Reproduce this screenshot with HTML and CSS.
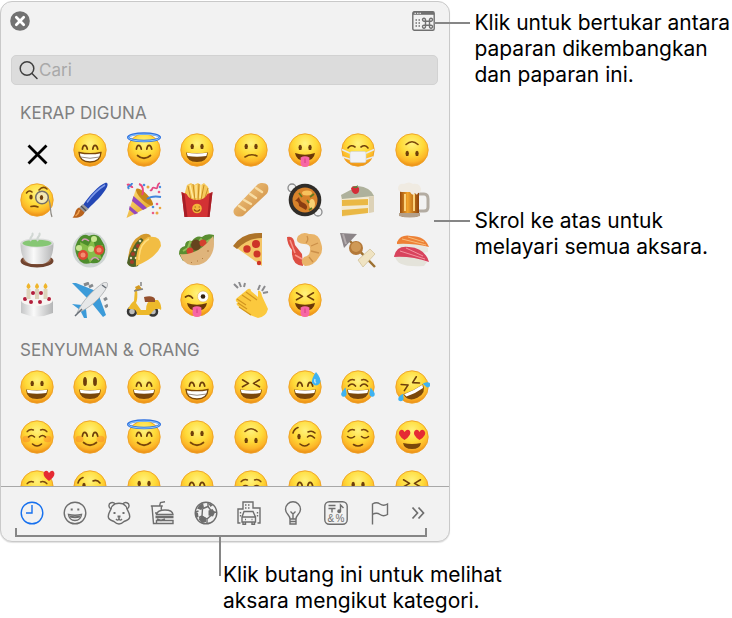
FILE: index.html
```html
<!DOCTYPE html>
<html lang="ms">
<head>
    <meta charset="UTF-8">
    <meta name="viewport" content="width=device-width, initial-scale=1.0">
    <title>Pelihat Aksara</title>
    <link rel="stylesheet" href="styles.css">
</head>
<body>
    <!-- Emoji artwork -->
    <svg class="sprite" aria-hidden="true">
        <defs>
            <radialGradient id="skin" cx=".5" cy=".3" r=".7">
                <stop offset="0" stop-color="#fff27c"/>
                <stop offset=".5" stop-color="#ffda38"/>
                <stop offset=".8" stop-color="#fcb628"/>
                <stop offset="1" stop-color="#ea8a15"/>
            </radialGradient>
            <linearGradient id="gold" x1="0" y1="0" x2="1" y2="1">
                <stop offset="0" stop-color="#ffe27c"/>
                <stop offset="1" stop-color="#e09c1c"/>
            </linearGradient>
            <linearGradient id="bread" x1="0" y1="0" x2="1" y2="1">
                <stop offset="0" stop-color="#f6cf8a"/>
                <stop offset="1" stop-color="#c98336"/>
            </linearGradient>
            <linearGradient id="china" x1="0" y1="0" x2="1" y2="0">
                <stop offset="0" stop-color="#c4c5c6"/>
                <stop offset=".4" stop-color="#fafafa"/>
                <stop offset="1" stop-color="#b4b5b6"/>
            </linearGradient>
            <linearGradient id="beer" x1="0" y1="0" x2="1" y2="0">
                <stop offset="0" stop-color="#9a4c0c"/>
                <stop offset=".4" stop-color="#f3a52c"/>
                <stop offset="1" stop-color="#8e430a"/>
            </linearGradient>

            <circle id="face" cx="18" cy="18" r="16.2" fill="url(#skin)" stroke="#eea024" stroke-width=".9"/>
            <g id="eyes" fill="#6e3f0b">
                <ellipse cx="13.2" cy="14.4" rx="1.7" ry="2.7"/>
                <ellipse cx="23" cy="14.4" rx="1.7" ry="2.7"/>
            </g>
            <path id="eyes-happy" d="M10.4 17.2c.5-5.2 4-5.2 4.9 0M20.8 17.2c.5-5.2 4-5.2 4.9 0" fill="none" stroke="#6e3f0b" stroke-width="1.7" stroke-linecap="round"/>
            <path id="eyes-squint" d="M9.5 10.8l6 3.6-6 3.4M26.5 10.8l-6 3.6 6 3.4" fill="none" stroke="#6e3f0b" stroke-width="1.6" stroke-linecap="round" stroke-linejoin="round"/>
            <path id="brows" d="M8.2 12.6q3-3.2 6.2-1.6M27.8 12.6q-3-3.2-6.2-1.6" fill="none" stroke="#7b480d" stroke-width="1.5" stroke-linecap="round"/>
            <g id="mouth-open">
                <path d="M7 20.5q11 1.6 22 0Q28.4 30 18 30T7 20.5Z" fill="#7a470a"/>
                <path d="M7.7 20.8q10.3 1.4 20.6 0l-1 3.2q-9.3 1.6-18.6 0Z" fill="#fff"/>
            </g>
            <g id="mouth-teeth">
                <path d="M7 20.5q11 2.4 22 0Q28.4 30 18 30T7 20.5Z" fill="#fff" stroke="#7a470a" stroke-width="1.3"/>
                <path d="M8.5 25q9.5 2.5 19 0" fill="none" stroke="#9a8f84"/>
            </g>
            <path id="mouth-smile" d="M11.5 23.5q6.5 5.5 13 0" fill="none" stroke="#7a470a" stroke-width="1.7" stroke-linecap="round"/>
            <g id="mouth-tongue">
                <path d="M8 21q10 3.5 20 0-1.2 7.800-10 7.800T8 21Z" fill="#6b3708"/>
                <path d="M13.600 25.500q4.300-2.500 8.800 0v6.500q-.6 3-4.400 3t-4.400-3Z" fill="#f766a5"/>
                <path d="M18 26.500v4.500" stroke="#d43d80"/>
            </g>
            <g id="blush" fill="#fa7a26" opacity=".4">
                <ellipse cx="7.5" cy="20" rx="4" ry="3.2"/>
                <ellipse cx="28.5" cy="20" rx="4" ry="3.2"/>
            </g>
            <path id="tear" d="M5.500 18.500c-2.400 3-5.200 5.500-4 8 1.200 2 4.600 1.400 5-1 .3-2-.6-3.500-1-7Z" fill="#3fb3f2"/>
        </defs>

        <symbol id="cross" viewBox="0 0 36 36"><path d="M10.500 14.500l16 16M26.500 14.500l-16 16" stroke="#000" stroke-width="2.800" stroke-linecap="square"/></symbol>
        <symbol id="beaming" viewBox="0 0 36 36"><use href="#face"/><use href="#eyes-happy"/><use href="#mouth-teeth"/></symbol>
        <symbol id="halo" viewBox="0 0 36 36">
            <use href="#face"/><use href="#eyes-happy"/><use href="#mouth-smile"/>
            <ellipse cx="18" cy="5.300" rx="15.800" ry="3.800" fill="none" stroke="#2d70e0" stroke-width="2.500"/>
            <ellipse cx="18" cy="5.600" rx="15.600" ry="3.500" fill="none" stroke="#8dc8fa" stroke-width="1"/>
        </symbol>
        <symbol id="grinning" viewBox="0 0 36 36"><use href="#face"/><use href="#eyes"/><use href="#mouth-open"/></symbol>
        <symbol id="confused" viewBox="0 0 36 36"><use href="#face"/><use href="#eyes"/><path d="M12 25q6-4 12-1" fill="none" stroke="#7a470a" stroke-width="1.600" stroke-linecap="round"/></symbol>
        <symbol id="tongue" viewBox="0 0 36 36"><use href="#face"/><use href="#eyes" y="1"/><use href="#mouth-tongue"/></symbol>
        <symbol id="mask" viewBox="0 0 36 36">
            <use href="#face"/><path d="M8 16q3-4 7-1M28 16q-3-4-7-1" fill="none" stroke="#6e3f0b" stroke-width="1.600" stroke-linecap="round"/>
            <path d="M1.800 17.500l9 4M34.200 17.500l-9 4M2.800 25l8 2.500M33.200 25l-8 2.500" stroke="#e8eaee" stroke-width="1.400"/>
            <rect x="10" y="19.500" width="16" height="11" rx="1.500" fill="#f1f2f6" stroke="#cfd1d8" stroke-width=".6"/>
        </symbol>
        <symbol id="upside-down" viewBox="0 0 36 36"><use href="#face"/><path d="M12 12.500q6-5.500 12 0" fill="none" stroke="#7a470a" stroke-width="1.600" stroke-linecap="round"/><use href="#eyes" y="7"/></symbol>
        <symbol id="monocle" viewBox="0 0 36 36">
            <use href="#face"/>
            <path d="M7.500 11q2.500-3.500 5.500-1M20 8q4-4.500 8-1M12 24.500q4-1 7 .5" fill="none" stroke="#7a470a" stroke-width="1.600" stroke-linecap="round"/>
            <ellipse cx="12" cy="15" rx="1.700" ry="2.500" fill="#6e3f0b"/>
            <circle cx="23" cy="15.500" r="6.300" fill="#f2e8b4" stroke="#75706a" stroke-width="1.500"/>
            <ellipse cx="22.500" cy="15.500" rx="1.700" ry="2.500" fill="#6e3f0b"/>
            <path d="M29.500 17c3 6 1 12 3.500 18" fill="none" stroke="#8c8880" stroke-width="1.200"/>
        </symbol>
        <symbol id="brush" viewBox="0 0 36 36">
            <path d="M11 23C17 14 27 3 33 1c3-1 3 2 2 4-4 8-12 15-19 22Z" fill="#2447b5"/>
            <path d="M15 20.500C21 12 28 6 33 3" fill="none" stroke="#7f9bea" stroke-width="1.500"/>
            <path d="M11 22l5.500 5-4.500 4-5-5Z" fill="#98989b"/><path d="M9 24l5 4.700" stroke="#4e4e52" stroke-width="1.200"/>
            <path d="M7 25.500l5.500 5C11 35 5 36.500.500 35.500 4 33 2 28 7 25.500Z" fill="#b8621d"/>
            <path d="M7.500 28q-1 4-4 6" fill="none" stroke="#f0a04d" stroke-width="1.500"/>
        </symbol>
        <symbol id="party" viewBox="0 0 36 36">
            <path d="M10 7l16.500 16L.500 36Z" fill="url(#gold)"/>
            <path d="M7.500 14l13.500 12-4 2L6 19ZM3.700 24l8.500 7-3.500 1.500L3 27.500Z" fill="#9448bd"/>
            <ellipse cx="18.500" cy="15" rx="3.600" ry="11.500" transform="rotate(-45 18.500 15)" fill="#c78618"/>
            <path d="M16 13c2-4 1-10-3-11M1 3c4-2 3 3 6 2" fill="none" stroke="#ed467b" stroke-width="2"/>
            <path d="M21 17c4-3 8-3 14-2M3 7c-3-4 3-2 3-6" fill="none" stroke="#4386dc" stroke-width="2"/>
            <path d="M24 8c3 2 1-4 5-2s1-4 5-5" fill="none" stroke="#e44982" stroke-width="1.800"/>
            <g fill="#eb5d86"><circle cx="33" cy="10" r="1.300"/><circle cx="31" cy="22" r="1.300"/><circle cx="27" cy="31" r="1.300"/></g>
            <g fill="#eba63f"><circle cx="22" cy="5" r="1.500"/><circle cx="34" cy="26" r="1.300"/><circle cx="31" cy="31" r="1.500"/></g>
            <g fill="#4b8fe0"><circle cx="18" cy="3" r="1.300"/><circle cx="27" cy="25" r="1.300"/><circle cx="34" cy="5" r="1.200"/></g>
        </symbol>
        <symbol id="fries" viewBox="0 0 36 36">
            <path d="M5 14L8 3l4-2 3 2 4-2 3 2 3-2 4 4 2 9-6 10H10Z" fill="#f6c95c"/>
            <path d="M9 4l3 14M14 2l2 16M20 2l-1 17M25 3l-3 15M29 6l-4 13M6 11l4 8" stroke="#c98f22" stroke-width="1"/>
            <path d="M11 3l3 13M17 3v13M22 3l-1 13" stroke="#ffeaa0" stroke-width="1.300"/>
            <path d="M2.500 10l5 2q3 6 10.500 6t10.500-6l5-2-3 25H5.500Z" fill="#d33234"/>
            <path d="M2.500 10l3 2 3 23h-3ZM33.500 10l-3 2-2 23h2Z" fill="#a81e27"/>
            <circle cx="18" cy="26.500" r="4.800" fill="#f3b53a"/><path d="M15 27.500q3 3.500 6 0M15.700 25h1M19.700 25h1" fill="none" stroke="#8d4b12" stroke-width="1.200"/>
        </symbol>
        <symbol id="baguette" viewBox="0 0 36 36">
            <path d="M2 26L24 3c3-3 9-2 10.500 0s1 7-1 9L11 33c-2 2-7 2-9 0s-2-5 0-7Z" fill="url(#bread)"/>
            <path d="M6 24l6 4M11 18l7 4M17 12l6 4M23 6l6 4" stroke="#f8dda4" stroke-width="2.400" stroke-linecap="round"/>
        </symbol>
        <symbol id="pan" viewBox="0 0 36 36">
            <circle cx="5" cy="6" r="4" fill="none" stroke="#8b8c8d" stroke-width="1.300"/><circle cx="31" cy="30" r="4" fill="none" stroke="#8b8c8d" stroke-width="1.300"/>
            <circle cx="18" cy="18" r="16.300" fill="#302d29"/><circle cx="18" cy="18" r="12.500" fill="#d8832b"/>
            <path d="M8 19q4 0 4 5l7 4q3-4-2-7-4-1-5-6Z" fill="#8a3d12"/><ellipse cx="25" cy="22" rx="3" ry="5" fill="#f7d174"/><ellipse cx="20" cy="11" rx="5" ry="2.500" fill="#f7c25d"/>
            <path d="M12 11l3 4M23 15l4-3M20 18l2 3M22 28l3-2" stroke="#5c7a22" stroke-width="1.700"/>
        </symbol>
        <symbol id="cake" viewBox="0 0 36 36">
            <path d="M1 13L18 5q14 1 16 9v16L2 35Z" fill="#f3ead3"/><path d="M1 13L18 4q12 1 16 10L2 17Z" fill="#aeb19c"/>
            <path d="M2 18l26-1v6L2 24ZM2 28l26-2v5L2 34Z" fill="#eab845"/><path d="M29 15l5-1v16l-5 1Z" fill="#ddd2b7"/>
            <path d="M11 6q4-4 8 0 1 5-3 6-4 0-5-6Z" fill="#d42d38"/><path d="M12 4l3 1 3-2-1 3h-3Z" fill="#4e8a3b"/>
        </symbol>
        <symbol id="beer-mug" viewBox="0 0 36 36">
            <path d="M23 12h7q4 0 4 5v8q0 4-4 4h-7" fill="none" stroke="#b3aca2" stroke-width="3"/>
            <path d="M6 8h19v23q0 3-3 4H9q-3-1-3-4Z" fill="url(#beer)"/><path d="M11 12v17M20 12v17" stroke="#fbd27b" stroke-width="2"/>
            <path d="M5 31h21v3q-10 3-21 0Z" fill="#b39f89"/>
            <path d="M4 6q1-5 6-4 5-3 9 0 7-1 8 5 0 4-3 4-1 3-3 0-2 4-5-1H8Q4 10 4 6Z" fill="#f0ebe2"/>
        </symbol>
        <symbol id="tea" viewBox="0 0 36 36">
            <ellipse cx="18" cy="29" rx="16.500" ry="6.500" fill="#71442f"/><ellipse cx="18" cy="27.500" rx="14" ry="5" fill="#9b6c51"/>
            <path d="M1.500 11h33q0 19-11 21h-11q-11-2-11-21Z" fill="url(#china)"/>
            <ellipse cx="18" cy="11" rx="16.500" ry="4.500" fill="#d8dad9"/><ellipse cx="18" cy="11.300" rx="14.500" ry="3.500" fill="#86c774"/>
            <path d="M12 9c-3-4 4-5 1-8M19 9c-3-4 4-5 1-8" fill="none" stroke="#d1d7d3" stroke-width="2"/>
        </symbol>
        <symbol id="salad" viewBox="0 0 36 36">
            <circle cx="18" cy="18" r="17.500" fill="#cdd4d2"/><path d="M5 10q5-10 12-6 9-4 13 5 6 8 1 15-3 9-12 7-9 3-13-5-5-8-1-16Z" fill="#4d8d2c"/>
            <path d="M8 10l8 4 5-8 2 9 8-2-4 7 3 7-8-2-4 6-4-9-8 4 3-7Z" fill="#86bd49"/>
            <g fill="#dd4933"><circle cx="11" cy="23" r="5"/><circle cx="27" cy="18" r="5"/></g><g fill="#f38e70"><circle cx="11" cy="23" r="2.500"/><circle cx="27" cy="18" r="2.500"/></g>
            <g fill="#c9e591"><circle cx="7" cy="16" r="3"/><circle cx="19" cy="17" r="3"/><circle cx="22" cy="7" r="3"/></g>
            <path d="M10 9q2-4 7 0M19 28q4-5 8 0" fill="none" stroke="#d799b9" stroke-width="1.500"/>
        </symbol>
        <symbol id="taco" viewBox="0 0 36 36">
            <path d="M2 30Q2 10 15 3q7-3 10 1L10 34Z" fill="#d49a2c"/>
            <path d="M1 31q1-7 5-13 4-9 9-12 6 3 3 12l-6 16q-8 3-11-3Z" fill="#4f6127"/>
            <g fill="#a53c28"><circle cx="7" cy="22" r="2"/><circle cx="12" cy="14" r="2"/><circle cx="6" cy="30" r="2"/></g>
            <g fill="#e8dcb4"><circle cx="9" cy="18" r="1.200"/><circle cx="5" cy="26" r="1.200"/><circle cx="14" cy="9" r="1.300"/><circle cx="10" cy="26" r="1.300"/></g>
            <path d="M10 34Q9 12 22 5q13-2 13 9-5 12-25 20Z" fill="#f2bd43"/><path d="M13 28Q13 12 23 7" fill="none" stroke="#ffdd7c" stroke-width="1.500"/>
        </symbol>
        <symbol id="wrap" viewBox="0 0 36 36">
            <path d="M0 22q0-7 6-8 0-6 7-5 4-6 10-4 4-4 12-2l-1 10L4 29Z" fill="#5a8e31"/>
            <path d="M4 19l5-3 2-6 6 3 5-6 3 4 7-4" fill="none" stroke="#91bd54" stroke-width="2"/>
            <ellipse cx="17" cy="13" rx="5" ry="5.500" fill="#65441e"/><circle cx="11" cy="19" r="3.500" fill="#d3402e"/><circle cx="24" cy="11" r="3.500" fill="#d3402e"/>
            <path d="M1 22q18 2 33-18 3 12-3 21-7 10-19 8Q3 31 1 22Z" fill="#dfb47b"/><path d="M12 31l1-1M23 26l1 1M29 18v2M18 29h1" stroke="#b27d42"/>
        </symbol>
        <symbol id="pizza" viewBox="0 0 36 36">
            <path d="M1 14Q12 2 29 3v31Z" fill="#f4c566"/><path d="M0 14Q10 0 29 1v5Q15 6 4 17Z" fill="#ad7329"/>
            <g fill="#cd3528"><circle cx="23" cy="12" r="4"/><circle cx="14" cy="17" r="3.700"/><circle cx="24" cy="22" r="3.500"/><circle cx="26" cy="31" r="2.200"/></g>
        </symbol>
        <symbol id="shrimp" viewBox="0 0 36 36">
            <path d="M0 5q7-2 8 8l7 9 1 12Q4 33 5 18 0 12 0 5Z" fill="#dd4e43"/><path d="M3 8l5 13M8 23l7 4" stroke="#fa968a" stroke-width="1.500"/>
            <path d="M11 4q5-5 11-2 10-1 12 9 3 8-2 14-5 9-14 9-6-3-1-9 6-1 6-7 1-6-6-6-10-1-6-8Z" fill="#e9b469"/>
            <path d="M20 4q2 4-1 7M31 11l-7 3M32 21l-8-2M26 30l-4-5" fill="none" stroke="#cc9049" stroke-width="1.300"/>
        </symbol>
        <symbol id="oden" viewBox="0 0 36 36">
            <path d="M8 7l27 28" stroke="#9d7132" stroke-width="2.500"/><path d="M0 1l17 1L4 16Z" fill="#8c8588"/><path d="M3 2l3 10" stroke="#b3abad" stroke-width="2"/>
            <circle cx="16" cy="16" r="7" fill="#b47939"/><circle cx="16" cy="15" r="5" fill="#cf9956"/>
            <path d="M18 28L30 17l5 5-12 13Z" fill="#efe3c2" stroke="#cfbd91" stroke-width=".7"/>
        </symbol>
        <symbol id="sushi" viewBox="0 0 36 36">
            <path d="M3 12q15-5 31 4v4q-18 4-31-8Z" fill="#e8e7df"/><path d="M3 10Q7 2 17 4q14 0 18 11-17-4-32-3Z" fill="#ed8136"/><path d="M8 7l24 6M14 5l16 5" stroke="#f8bd7a"/>
            <path d="M1 24q15-2 32 6l-3 4Q2 36 1 24Z" fill="#e4e3da"/><path d="M0 25q2-12 15-10 16 1 20 15-17-6-35-5Z" fill="#d8435d"/><path d="M6 19l25 8M12 16l17 8" stroke="#f393a1"/>
        </symbol>
        <symbol id="birthday" viewBox="0 0 36 36">
            <path d="M2 18h32v13q-16 7-32 0Z" fill="url(#china)"/><ellipse cx="18" cy="18" rx="16" ry="6" fill="#f7f4f1"/>
            <g fill="#b31e3c"><circle cx="6" cy="17" r="2"/><circle cx="12" cy="20" r="2"/><circle cx="21" cy="20" r="2"/><circle cx="30" cy="17" r="2"/><circle cx="14" cy="11" r="2"/><circle cx="22" cy="11" r="2"/></g>
            <path d="M9.500 17V7M18 17V7M26.500 17V7" stroke="#ddd3bb" stroke-width="4"/>
            <path d="M9.500 7q-4-2 0-6 4 4 0 6ZM18 7q-4-2 0-6 4 4 0 6ZM26.500 7q-4-2 0-6 4 4 0 6Z" fill="#efb52b"/>
        </symbol>
        <symbol id="plane" viewBox="0 0 36 36">
            <path d="M0 1h4l20 8 3 5 7 19-3 2-13-16ZM0 22l10 1 4 4 1 9h-3L8 28Z" fill="#3c9bd9"/>
            <path d="M12 3l5-2M17 5l4-2M32 18l3-2M33 25l3-2" stroke="#85898d" stroke-width="3"/>
            <path d="M5 31C10 19 21 8 31 1c5-2 5 1 4 4C29 16 17 27 5 31Z" fill="#e6e7e8" stroke="#a8abad" stroke-width=".8"/>
            <path d="M30 3l4 3M3 34l7-7" stroke="#686f77" stroke-width="1.500"/>
        </symbol>
        <symbol id="scooter" viewBox="0 0 36 36">
            <g fill="#bebebd" stroke="#363636" stroke-width="2.500"><circle cx="6" cy="29.500" r="4"/><circle cx="27" cy="29.500" r="4"/></g>
            <path d="M11 7q1 10-1 14l5 7h5q0-9 6-10h6q4 5 3 10-4-3-8 1-2 3-4 4H11q0-6-5-6H2q3-6 6-8l1-12Z" fill="#edb92b"/>
            <path d="M18 15q9-2 11 2v3H19Z" fill="#94502e"/><path d="M9 5l4-2 3 4-5 2Z" fill="#d49a20"/>
            <path d="M15 4V0M8 9l9-2" stroke="#858585" stroke-width="1.500"/>
        </symbol>
        <symbol id="winking-tongue" viewBox="0 0 36 36">
            <use href="#face"/><path d="M6.500 15q4-3 7 1" fill="none" stroke="#6e3f0b" stroke-width="1.800" stroke-linecap="round"/>
            <circle cx="24" cy="14.500" r="5.500" fill="#fff" stroke="#d8a443" stroke-width=".5"/><circle cx="24" cy="14.500" r="2.300" fill="#34220f"/><use href="#mouth-tongue"/>
        </symbol>
        <symbol id="clap" viewBox="0 0 36 36">
            <path d="M1 2l4 4M6 0l2 5M12 1l-1 4M27 3l-2 5M32 4l-3 5M35 10l-5 1" stroke="#8b8b8e" stroke-width="2"/>
            <path d="M4 16L15 7q3-1 3 2l7 6V9q3-1 4 5l6 13q-2 8-10 9l-8-3L5 24q-3-3 0-3-4-3-1-5Z" fill="#fbc93e"/>
            <path d="M4 17l9 6M5 21l9 6M9 13l9 6M13 10l11 8M6 25l12 8" fill="none" stroke="#d2951f" stroke-width="1.200"/>
        </symbol>
        <symbol id="squint-tongue" viewBox="0 0 36 36"><use href="#face"/><use href="#eyes-squint"/><use href="#mouth-tongue"/></symbol>
        <symbol id="big-eyes" viewBox="0 0 36 36">
            <use href="#face"/><g fill="#6e3f0b"><ellipse cx="13" cy="12.500" rx="1.900" ry="4.600"/><ellipse cx="23" cy="12.500" rx="1.900" ry="4.600"/></g><use href="#mouth-open"/>
        </symbol>
        <symbol id="smiling-eyes" viewBox="0 0 36 36"><use href="#face"/><use href="#eyes-happy"/><use href="#mouth-open"/></symbol>
        <symbol id="squinting" viewBox="0 0 36 36"><use href="#face"/><use href="#eyes-squint"/><use href="#mouth-open"/></symbol>
        <symbol id="sweat" viewBox="0 0 36 36"><use href="#face"/><use href="#eyes-happy"/><use href="#mouth-open"/><path d="M29 3q6 7 4 11-4 5-8 0-1-4 4-11Z" fill="#3fb3f2"/><path d="M28 10q-1 3 1 4" fill="none" stroke="#b5e5fc" stroke-width="1.500"/></symbol>
        <symbol id="joy" viewBox="0 0 36 36">
            <use href="#face"/><use href="#brows"/><path d="M8.500 17q3.500-4 7 0M20.500 17q3.500-4 7 0" fill="none" stroke="#6e3f0b" stroke-width="1.700" stroke-linecap="round"/><use href="#mouth-open"/>
            <use href="#tear"/><use href="#tear" transform="matrix(-1 0 0 1 36 0)"/>
        </symbol>
        <symbol id="rofl" viewBox="0 0 36 36">
            <use href="#face"/>
            <g transform="rotate(-27 18 18)"><use href="#eyes-squint"/><use href="#mouth-open"/><path d="M7 20q-7 0-7 4 2 3 5 1ZM29 20q7 0 7 4-2 3-5 1Z" fill="#3fb3f2"/></g>
        </symbol>
        <symbol id="relaxed" viewBox="0 0 36 36"><use href="#face"/><use href="#blush"/><use href="#brows"/><path d="M9.500 18q3-3 6 0M20.500 18q3-3 6 0M13.500 25q4.500 4 9 0" fill="none" stroke="#6e3f0b" stroke-width="1.600" stroke-linecap="round"/></symbol>
        <symbol id="blushing" viewBox="0 0 36 36"><use href="#face"/><use href="#blush"/><use href="#eyes-happy"/><use href="#mouth-smile"/></symbol>
        <symbol id="slight-smile" viewBox="0 0 36 36"><use href="#face"/><use href="#eyes"/><use href="#mouth-smile"/></symbol>
        <symbol id="wink" viewBox="0 0 36 36"><use href="#face"/><path d="M6 14q1-4 5-5.500M21 13q4-2 7 1M20.500 18q3-3 7 1M13 25q5 4 9 0" fill="none" stroke="#6e3f0b" stroke-width="1.600" stroke-linecap="round"/><ellipse cx="12" cy="17.500" rx="1.700" ry="2.700" fill="#6e3f0b"/></symbol>
        <symbol id="relieved" viewBox="0 0 36 36"><use href="#face"/><use href="#brows"/><path d="M7.500 17.500q3.500 3 7 0M21.500 17.500q3.500 3 7 0M13.500 25.500q4.500 3 9 0" fill="none" stroke="#6e3f0b" stroke-width="1.600" stroke-linecap="round"/></symbol>
        <symbol id="heart-eyes" viewBox="0 0 36 36">
            <use href="#face"/><path d="M10.500 21Q3 16 5.500 12q3-3 5 1 3-4 5.500-1 2 4-5.500 9ZM25.500 21Q18 16 20.500 12q3-3 5 1 2-4 5-1 3 4-5 9Z" fill="#e52b34"/>
            <path d="M9 24q9 2 18 0-1 6-9 6t-9-6Z" fill="#7a470a"/>
        </symbol>
        <symbol id="hearts" viewBox="0 0 36 36"><use href="#face"/><use href="#brows" y="2"/><path d="M30 12q-7-5-5-9 3-3 5 1 3-4 5-1 2 4-5 9Z" fill="#e52b34"/></symbol>
        <symbol id="kiss" viewBox="0 0 36 36"><use href="#face"/><path d="M6 14q1-4 5-5.500M21 12q4-2 7 2" fill="none" stroke="#6e3f0b" stroke-width="1.600" stroke-linecap="round"/><ellipse cx="12" cy="16.500" rx="1.700" ry="2.700" fill="#6e3f0b"/></symbol>
    </svg>

    <main class="figure">
        <section class="viewer" aria-label="Pelihat Aksara">
            <header class="viewer-header">
                <button aria-label="Tutup">
                    <svg width="20" height="20" viewBox="0 0 20 20"><circle cx="10" cy="10" r="9.800" fill="#727272"/><path d="M6.300 6.300l7.400 7.400M13.700 6.300l-7.400 7.400" stroke="#fff" stroke-width="2.700" stroke-linecap="round"/></svg>
                </button>
                <button aria-label="Tukar paparan">
                    <svg width="23" height="20" viewBox="0 0 23 20" fill="none" stroke="#707070">
                        <rect x=".8" y=".8" width="21.400" height="18.400" rx="1.500" stroke-width="1.400"/><path d="M1 2.300h21" stroke-width="3"/><path d="M2.500 2.300h7" stroke="#f2f2f2" stroke-dasharray="1.500 1"/>
                        <path d="M3.500 9h5M3.500 12h5M3.500 15h5" stroke-dasharray="1.500 1.500" stroke-width="1.300"/>
                        <path d="M13.500 10.200h4v4h-4zM13.500 10.200h-1.400a1.500 1.500 0 1 1 1.400-1.500zM17.500 10.200h1.400a1.500 1.500 0 1 0-1.400-1.500zM13.500 14.200h-1.400a1.500 1.500 0 1 0 1.400 1.500zM17.500 14.200h1.400a1.500 1.500 0 1 1-1.400 1.500z" stroke-width="1.400"/>
                    </svg>
                </button>
            </header>

            <label class="search">
                <svg width="20" height="20" viewBox="0 0 20 20" fill="none" stroke="#404040" stroke-width="1.500"><circle cx="8" cy="8.500" r="6.800"/><path d="M13 13.500l5 5" stroke-linecap="round"/></svg>
                <input type="search" placeholder="Cari" aria-label="Cari">
            </label>

            <div class="characters">
                <h2>KERAP DIGUNA</h2>
                <div class="emoji-grid">
                    <button aria-label="Pangkah"><svg><use href="#cross"/></svg></button>
                    <button aria-label="Berseri"><svg><use href="#beaming"/></svg></button>
                    <button aria-label="Malaikat"><svg><use href="#halo"/></svg></button>
                    <button aria-label="Sengih"><svg><use href="#grinning"/></svg></button>
                    <button aria-label="Keliru"><svg><use href="#confused"/></svg></button>
                    <button aria-label="Jelir lidah"><svg><use href="#tongue"/></svg></button>
                    <button aria-label="Topeng muka"><svg><use href="#mask"/></svg></button>
                    <button aria-label="Terbalik"><svg><use href="#upside-down"/></svg></button>
                    <button aria-label="Monokel"><svg><use href="#monocle"/></svg></button>
                    <button aria-label="Berus lukisan"><svg><use href="#brush"/></svg></button>
                    <button aria-label="Parti"><svg><use href="#party"/></svg></button>
                    <button aria-label="Kentang goreng"><svg><use href="#fries"/></svg></button>
                    <button aria-label="Baguette"><svg><use href="#baguette"/></svg></button>
                    <button aria-label="Kuali"><svg><use href="#pan"/></svg></button>
                    <button aria-label="Kek"><svg><use href="#cake"/></svg></button>
                    <button aria-label="Bir"><svg><use href="#beer-mug"/></svg></button>
                    <button aria-label="Teh"><svg><use href="#tea"/></svg></button>
                    <button aria-label="Salad"><svg><use href="#salad"/></svg></button>
                    <button aria-label="Taco"><svg><use href="#taco"/></svg></button>
                    <button aria-label="Roti isi"><svg><use href="#wrap"/></svg></button>
                    <button aria-label="Piza"><svg><use href="#pizza"/></svg></button>
                    <button aria-label="Udang"><svg><use href="#shrimp"/></svg></button>
                    <button aria-label="Oden"><svg><use href="#oden"/></svg></button>
                    <button aria-label="Sushi"><svg><use href="#sushi"/></svg></button>
                    <button aria-label="Kek hari jadi"><svg><use href="#birthday"/></svg></button>
                    <button aria-label="Kapal terbang"><svg><use href="#plane"/></svg></button>
                    <button aria-label="Skuter"><svg><use href="#scooter"/></svg></button>
                    <button aria-label="Kenyit dan jelir"><svg><use href="#winking-tongue"/></svg></button>
                    <button aria-label="Tepuk tangan"><svg><use href="#clap"/></svg></button>
                    <button aria-label="Pejam dan jelir"><svg><use href="#squint-tongue"/></svg></button>
                </div>

                <h2>SENYUMAN &amp; ORANG</h2>
                <div class="emoji-grid">
                    <button aria-label="Sengih"><svg><use href="#grinning"/></svg></button>
                    <button aria-label="Mata besar"><svg><use href="#big-eyes"/></svg></button>
                    <button aria-label="Mata senyum"><svg><use href="#smiling-eyes"/></svg></button>
                    <button aria-label="Berseri"><svg><use href="#beaming"/></svg></button>
                    <button aria-label="Ketawa"><svg><use href="#squinting"/></svg></button>
                    <button aria-label="Peluh"><svg><use href="#sweat"/></svg></button>
                    <button aria-label="Air mata gembira"><svg><use href="#joy"/></svg></button>
                    <button aria-label="Ketawa berguling"><svg><use href="#rofl"/></svg></button>
                    <button aria-label="Santai"><svg><use href="#relaxed"/></svg></button>
                    <button aria-label="Tersipu"><svg><use href="#blushing"/></svg></button>
                    <button aria-label="Malaikat"><svg><use href="#halo"/></svg></button>
                    <button aria-label="Senyum"><svg><use href="#slight-smile"/></svg></button>
                    <button aria-label="Terbalik"><svg><use href="#upside-down"/></svg></button>
                    <button aria-label="Kenyit"><svg><use href="#wink"/></svg></button>
                    <button aria-label="Lega"><svg><use href="#relieved"/></svg></button>
                    <button aria-label="Mata hati"><svg><use href="#heart-eyes"/></svg></button>
                    <button aria-label="Disayangi"><svg><use href="#hearts"/></svg></button>
                    <button aria-label="Cium"><svg><use href="#kiss"/></svg></button>
                    <button aria-label="Cium biasa"><svg><use href="#slight-smile"/></svg></button>
                    <button aria-label="Cium mata senyum"><svg><use href="#blushing"/></svg></button>
                    <button aria-label="Cium mata tutup"><svg><use href="#relaxed"/></svg></button>
                    <button aria-label="Sedap"><svg><use href="#smiling-eyes"/></svg></button>
                    <button aria-label="Lidah"><svg><use href="#tongue"/></svg></button>
                    <button aria-label="Lidah dan pejam"><svg><use href="#squint-tongue"/></svg></button>
                </div>
            </div>

            <nav class="categories" aria-label="Kategori">
                <button class="active" aria-label="Kerap diguna"><svg viewBox="0 0 24 24"><circle cx="12" cy="12" r="10.800"/><path d="M12 4v8H6"/></svg></button>
                <button aria-label="Senyuman &amp; Orang"><svg viewBox="0 0 24 24"><circle cx="12" cy="12" r="10.800"/><path d="M5.500 13.500q6.500 1.500 13 0-.8 6-6.500 6t-6.500-6Z"/><path d="M7 15.500q5 1.500 10 0" stroke-width="2"/><path d="M8.700 7.500v2M15.300 7.500v2" stroke-width="2"/></svg></button>
                <button aria-label="Haiwan &amp; Alam"><svg viewBox="0 0 24 24"><path d="M8 2.800q4-1.200 8 0c2-2.600 6.500-1 6 2.300-.2 1.700-1.200 2.500-2 2.800 1.300 3 3 5 2.700 8-.2 3-3 3.500-5.700 4.600-2 2-3 2.500-5 2.500s-3-.500-5-2.500c-2.700-1.100-5.500-1.600-5.700-4.600-.3-3 1.400-5 2.700-8-.8-.3-1.800-1.100-2-2.800C1.500 1.800 6 .2 8 2.800Z"/><path d="M4 7.800q.5-3 4-5M20 7.800q-.5-3-4-5M9 18q2 2.500 3-.500 1 3 3 .5M12 15.500v2"/><path d="M7.500 11v2M16.500 11v2M10.500 15.500h3" stroke-width="2"/></svg></button>
                <button aria-label="Makanan &amp; Minuman"><svg viewBox="0 0 24 24"><path d="M.800 5h12M2 5l1.500 17.500h3.500M11.500 5l-.3 3.500M9.500 5l1-3.500L15 .800M5 12h2.500M6.500 13.500q1-4.500 8.500-4.500t8 4.500ZM6.500 19.500h16.500v3H6.500Z"/><path d="M5.500 16h18" stroke-width="2.500"/><path d="M7 18l4 1.500 4-1.500"/></svg></button>
                <button aria-label="Aktiviti"><svg viewBox="0 0 24 24"><circle cx="12" cy="12" r="10.800"/><path d="M9 7.500l5-2M8.500 8l-.5 7M8 15l5 3M13 18l4-3.500V9.500M17 9.500l-3-4M8.500 7.500L6 4M14 5.500V1.500M17 10.500l6 1M5 16.500l3-1.500M13 18v5M1.500 11l3-1"/><path d="M5 4.500l4-2.500 1 4.500-3 2.500-4-1.500ZM14.500 9.500l4-1.500 2.500 3.500-2 4-4.500-1ZM8 15l4 2v4l-4 1-3.500-4ZM1 10.500l3 1.500.5 4-2.500 1ZM14 2l5 2-2.500 2Z" fill="#6e6e6e" stroke="none"/></svg></button>
                <button aria-label="Perjalanan &amp; Tempat"><svg viewBox="0 0 24 24"><path d="M3.500 22H1V8h5V1h10v6h7v15h-2.500"/><path d="M8 4h6M8 7h6M3.500 11v6M20.500 11v5" stroke-dasharray="1.500 1.500"/><path d="M5 16l2-5.500h9l2.500 5.500v5H5ZM5 16h13.500M6 21v2.200h2.500V21M15 21v2.200h2.500V21M8 18.500h1M14.500 18.500h1"/></svg></button>
                <button aria-label="Objek"><svg viewBox="0 0 24 24"><path d="M9 18c0-4-4.500-5-4.500-9.700a7.500 7.500 0 0 1 15 0c0 4.700-4.500 5.700-4.500 9.700ZM9 18v5h6v-5M9 20.500h6M12 18v-5L9.500 10.500M12 13l2.500-2.500"/></svg></button>
                <button aria-label="Simbol"><svg viewBox="0 0 24 24"><rect x=".8" y=".8" width="22.400" height="22.400" rx="4.500"/><path d="M4.500 4.500h7M4.500 7.500h7M8 7.500v4M16.500 10.500V4l3 3"/><circle cx="15.200" cy="10.300" r="1.300" fill="#6e6e6e"/><text x="3.500" y="20.500">&amp;</text><text x="11.500" y="20.500">%</text></svg></button>
                <button aria-label="Bendera"><svg viewBox="0 0 24 24"><path d="M4.500 23.500V3q4-2.500 7.500 0t7.500 0v10.500q-4 2.500-7.500 0t-7.500 0"/></svg></button>
                <button aria-label="Lagi"><svg viewBox="0 0 24 24"><path d="M6.500 6.500l5 5.500-5 5.500M12.500 6.500l5 5.500-5 5.500" stroke-width="1.700"/></svg></button>
            </nav>
        </section>

        <aside class="notes">
            <p class="note">Klik untuk bertukar antara paparan dikembangkan dan&nbsp;paparan ini.</p>
            <p class="note">Skrol ke atas untuk melayari semua aksara.</p>
        </aside>

        <div class="note-below">
            <span class="bracket"></span>
            <p>Klik butang ini untuk melihat aksara mengikut kategori.</p>
        </div>
    </main>
</body>
</html>
```

FILE: styles.css
```css
* {
    margin: 0;
    padding: 0;
    box-sizing: border-box;
}

body {
    font-family: Inter, "Liberation Sans", sans-serif;
    background: #fff;
    color: #000;
}

button {
    border: none;
    background: none;
    cursor: pointer;
}

svg {
    display: block;
}

.sprite {
    position: absolute;
    width: 0;
    height: 0;
}

.figure {
    display: grid;
    grid-template-columns: minmax(0, 8fr) minmax(0, 5fr);
    padding-top: 1px;
}

/* Character viewer window */
.viewer {
    background: #f2f2f2;
    border: 1px solid #c9c9c9;
    border-radius: 12px;
    box-shadow: 0 1px 1px #e2e2e2;
}

.viewer-header {
    display: flex;
    justify-content: space-between;
    padding: 9px 14px 0 9px;
}

.search {
    display: flex;
    align-items: center;
    height: 30px;
    margin: 24px 11px 0 10px;
    padding-left: 7px;
    background: #dcdcdc;
    border: 1px solid #d2d2d2;
    border-radius: 5px;
}

.search input {
    flex: 1;
    min-width: 0;
    border: none;
    outline: none;
    background: none;
    font: inherit;
    font-size: 17px;
}

.search input::placeholder {
    color: #a9a9a9;
}

.characters {
    height: 401px;
    padding: 17px 11px 0 9px;
    overflow: hidden;
}

.characters h2 {
    padding-left: 10px;
    color: #808080;
    font-size: 17px;
    font-weight: 400;
    line-height: 22px;
}

.emoji-grid {
    display: grid;
    grid-template-columns: repeat(8, 1fr);
    grid-auto-rows: 50px;
    margin: 1px 0 14px;
}

.emoji-grid button {
    display: flex;
    justify-content: center;
    align-items: center;
}

.emoji-grid svg {
    width: 36px;
    height: 36px;
}

.categories {
    display: grid;
    grid-template-columns: repeat(9, 1fr) 34px;
    height: 55px;
    padding: 0 14px 2px 9px;
    border-top: 1px solid #a8a8a8;
}

.categories button {
    display: flex;
    justify-content: center;
    align-items: center;
    color: #6e6e6e;
}

.categories .active {
    color: #1670ee;
}

.categories svg {
    width: 24px;
    height: 24px;
    fill: none;
    stroke: currentColor;
    stroke-width: 1.4;
}

.categories text {
    fill: currentColor;
    stroke: none;
    font-size: 10px;
    font-weight: 500;
}

/* Callouts */
.notes {
    display: flex;
    flex-direction: column;
    gap: 120px;
    padding: 9px 0 0 24px;
}

.note {
    position: relative;
    font-size: 21px;
    line-height: 26px;
}

.note:last-child {
    max-width: 240px;
}

.note::before {
    content: "";
    position: absolute;
    top: 12px;
    left: -40px;
    width: 36px;
    height: 2px;
    background: #868686;
}

.note-below {
    position: relative;
    grid-column: 1 / -1;
    padding: 20px 0 0 223px;
    font-size: 21px;
    line-height: 26px;
}

.note-below p {
    max-width: 300px;
}

.bracket {
    position: absolute;
    top: -14px;
    left: 15px;
    width: 412px;
    height: 9px;
    border: 2px solid #868686;
    border-top: none;
}

.bracket::after {
    content: "";
    position: absolute;
    top: 9px;
    left: 202px;
    width: 2px;
    height: 39px;
    background: #868686;
}
```
